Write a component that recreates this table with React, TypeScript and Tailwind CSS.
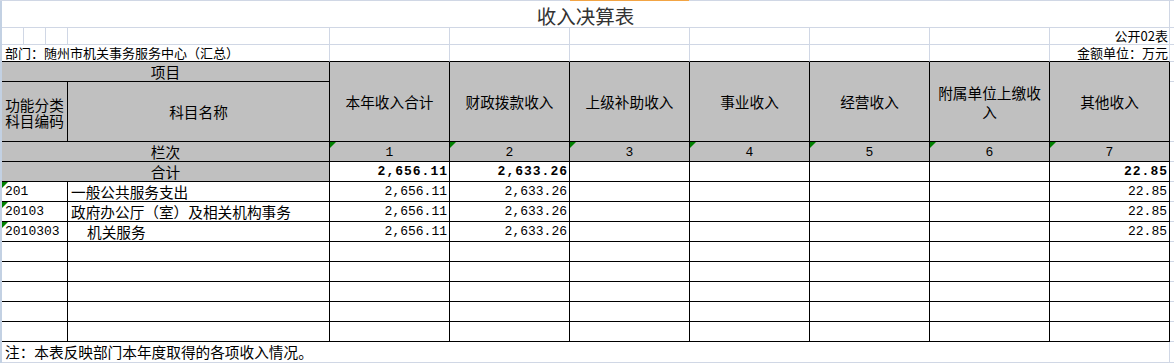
import React from "react";

const NUMS = ["1", "2", "3", "4", "5", "6", "7"];
const HEADS: React.ReactNode[] = [
  "本年收入合计",
  "财政拨款收入",
  "上级补助收入",
  "事业收入",
  "经营收入",
  <>附属单位上缴收<br />入</>,
  "其他收入",
];
const VALS = ["2,656.11", "2,633.26", "", "", "", "", "22.85"];
const ROWS = [
  { code: "201", name: "一般公共服务支出", indent: false },
  { code: "20103", name: "政府办公厅（室）及相关机构事务", indent: false },
  { code: "2010303", name: "机关服务", indent: true },
];

function Tri() {
  return (
    <span className="absolute left-0 top-0 h-0 w-0 border-t-[6px] border-r-[6px] border-t-[#008000] border-r-transparent" />
  );
}

function Extra() {
  return <div className="border-b border-[#d0d7e5]" />;
}

export default function App() {
  return (
    <div className="w-[1174px] h-[363px] overflow-hidden bg-white text-black font-['Noto_Sans_CJK_SC',sans-serif]">
      {/* top gridline with selected column mark */}
      <div className="flex h-px">
        <div className="w-[570px] bg-[#d0d7e5]" />
        <div className="w-[119px] bg-[#f2a444]" />
        <div className="flex-1 bg-[#d0d7e5]" />
      </div>
      <div className="flex h-[362px]">
        <div className="w-[2px] bg-[#c3d1e3]" />
        <div className="grid grid-cols-[22px_22px_22px_262px_repeat(7,120px)_4px] grid-rows-[27px_17px_17px_20px_60px_repeat(10,20px)_21px]">
          {/* title row */}
          <div className="col-span-11 flex items-end justify-center border-r border-b border-[#d0d7e5] pb-[1px] text-[19.5px] leading-[20px] text-[#333]">
            收入决算表
          </div>
          <Extra />

          {/* row 2 */}
          <div className="border-r border-b border-[#d0d7e5]" />
          <div className="border-r border-b border-[#d0d7e5]" />
          <div className="border-r border-b border-[#d0d7e5]" />
          <div className="border-r border-b border-[#d0d7e5]" />
          <div className="border-r border-b border-[#d0d7e5]" />
          <div className="border-r border-b border-[#d0d7e5]" />
          <div className="border-r border-b border-[#d0d7e5]" />
          <div className="border-r border-b border-[#d0d7e5]" />
          <div className="border-r border-b border-[#d0d7e5]" />
          <div className="border-r border-b border-[#d0d7e5]" />
          <div className="flex items-center justify-end border-r border-b border-[#d0d7e5] pr-[1px] text-[13px] leading-[16px] whitespace-nowrap">
            公开02表
          </div>
          <Extra />

          {/* row 3 */}
          <div className="col-span-4 flex items-center border-r border-b border-r-[#d0d7e5] border-b-black pl-[3px] text-[13px] leading-[16px] whitespace-nowrap">
            部门：随州市机关事务服务中心（汇总）
          </div>
          <div className="border-r border-b border-r-[#d0d7e5] border-b-black" />
          <div className="border-r border-b border-r-[#d0d7e5] border-b-black" />
          <div className="border-r border-b border-r-[#d0d7e5] border-b-black" />
          <div className="border-r border-b border-r-[#d0d7e5] border-b-black" />
          <div className="border-r border-b border-r-[#d0d7e5] border-b-black" />
          <div className="border-r border-b border-r-[#d0d7e5] border-b-black" />
          <div className="flex items-center justify-end border-r border-b border-r-[#d0d7e5] border-b-black pr-[1px] text-[13px] leading-[16px] whitespace-nowrap">
            金额单位：万元
          </div>
          <Extra />

          {/* header row 4 */}
          <div className="col-span-4 flex items-center justify-center border-r border-b border-black bg-[#c0c0c0] text-[14.67px] leading-[18px]">
            项目
          </div>
          {HEADS.map((h, i) => (
            <div
              key={i}
              className="row-span-2 flex items-center justify-center border-r border-b border-black bg-[#c0c0c0] text-center text-[14.67px] leading-[19px]"
            >
              <span>{h}</span>
            </div>
          ))}
          <Extra />

          {/* header row 5 */}
          <div className="col-span-3 flex flex-col items-center justify-center border-r border-b border-black bg-[#c0c0c0] pt-[3px] text-center text-[14.67px]">
            <div className="h-[16px] leading-[16px] overflow-visible">功能分类</div>
            <div className="h-[16px] leading-[16px] overflow-visible">科目编码</div>
          </div>
          <div className="flex items-center justify-center border-r border-b border-black bg-[#c0c0c0] pt-[1px] text-[14.67px] leading-[18px]">
            科目名称
          </div>
          <Extra />

          {/* 栏次 */}
          <div className="col-span-4 flex items-center justify-center border-r border-b border-black bg-[#c0c0c0] text-[14.67px] leading-[18px]">
            栏次
          </div>
          {NUMS.map((n) => (
            <div
              key={n}
              className="relative flex items-center justify-center border-r border-b border-black bg-[#c0c0c0] pt-[2px] font-['Liberation_Mono',monospace] text-[13px] leading-[16px]"
            >
              <Tri />
              {n}
            </div>
          ))}
          <Extra />

          {/* 合计 */}
          <div className="col-span-4 flex items-center justify-center border-r border-b border-black bg-[#c0c0c0] text-[14.67px] leading-[18px]">
            合计
          </div>
          {VALS.map((v, i) => (
            <div
              key={i}
              className="flex items-center justify-end border-r border-b border-black pr-[1px] font-['Liberation_Mono',monospace] text-[13px] font-bold leading-[16px] tracking-[1px]"
            >
              {v}
            </div>
          ))}
          <Extra />

          {/* data rows */}
          {ROWS.map((r) => (
            <React.Fragment key={r.code}>
              <div className="relative col-span-3 flex items-center border-r border-b border-black pl-[3px] font-['Liberation_Mono',monospace] text-[13px] leading-[16px]">
                <Tri />
                {r.code}
              </div>
              <div
                className={
                  r.indent
                    ? "flex items-center border-r border-b border-black pl-[19px] text-[14.67px] leading-[18px] whitespace-nowrap"
                    : "flex items-center border-r border-b border-black pl-[3px] text-[14.67px] leading-[18px] whitespace-nowrap"
                }
              >
                {r.name}
              </div>
              {VALS.map((v, i) => (
                <div
                  key={i}
                  className="flex items-center justify-end border-r border-b border-black pr-[2px] font-['Liberation_Mono',monospace] text-[13px] leading-[16px]"
                >
                  {v}
                </div>
              ))}
              <Extra />
            </React.Fragment>
          ))}

          {/* empty rows */}
          {[0, 1, 2, 3, 4].map((k) => (
            <React.Fragment key={k}>
              <div className="col-span-3 border-r border-b border-black" />
              <div className="border-r border-b border-black" />
              <div className="border-r border-b border-black" />
              <div className="border-r border-b border-black" />
              <div className="border-r border-b border-black" />
              <div className="border-r border-b border-black" />
              <div className="border-r border-b border-black" />
              <div className="border-r border-b border-black" />
              <div className="border-r border-b border-black" />
              <Extra />
            </React.Fragment>
          ))}

          {/* note */}
          <div className="col-span-11 flex items-center border-r border-b border-[#d0d7e5] pl-[3px] text-[14.67px] leading-[18px] whitespace-nowrap">
            注：本表反映部门本年度取得的各项收入情况。
          </div>
          <Extra />
        </div>
      </div>
    </div>
  );
}
